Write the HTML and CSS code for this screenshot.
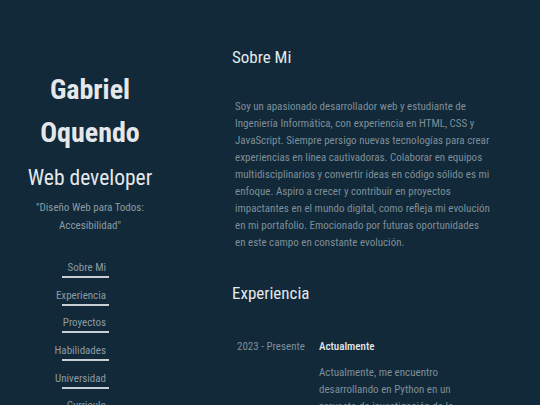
FILE: index.html
```html
<!DOCTYPE html>
<html lang="es">
<head>
<meta charset="utf-8">
<title>Gabriel Oquendo</title>
<link rel="stylesheet" href="styles.css">
</head>
<body>
<div class="page">
  <aside class="sidebar">
    <h1 class="name">Gabriel<br>Oquendo</h1>
    <h2 class="role">Web developer</h2>
    <p class="quote">"Diseño Web para Todos:<br>Accesibilidad"</p>
    <nav class="nav">
      <a class="nav-link" href="#sobre"><span>Sobre Mi</span></a>
      <a class="nav-link" href="#experiencia"><span>Experiencia</span></a>
      <a class="nav-link" href="#proyectos"><span>Proyectos</span></a>
      <a class="nav-link" href="#habilidades"><span>Habilidades</span></a>
      <a class="nav-link" href="#universidad"><span>Universidad</span></a>
      <a class="nav-link" href="#curriculo"><span>Curriculo</span></a>
    </nav>
  </aside>
  <main class="main">
    <section class="section" id="sobre">
      <h3 class="section-title">Sobre Mi</h3>
      <p class="about">Soy un apasionado desarrollador web y estudiante de Ingeniería Informática, con experiencia en HTML, CSS y JavaScript. Siempre persigo nuevas tecnologías para crear experiencias en línea cautivadoras. Colaborar en equipos multidisciplinarios y convertir ideas en código sólido es mi enfoque. Aspiro a crecer y contribuir en proyectos impactantes en el mundo digital, como refleja mi evolución en mi portafolio. Emocionado por futuras oportunidades en este campo en constante evolución.</p>
    </section>
    <section class="section" id="experiencia">
      <h3 class="section-title">Experiencia</h3>
      <div class="exp">
        <div class="exp-date">2023 - Presente</div>
        <div class="exp-body">
          <div class="exp-title">Actualmente</div>
          <p class="exp-text">Actualmente, me encuentro desarrollando en Python en un proyecto de investigación de la universidad.</p>
        </div>
      </div>
    </section>
  </main>
</div>
</body>
</html>
```
FILE: styles.css
```css
html, body {
  margin: 0;
  padding: 0;
  background: #112938;
  height: 100%;
  overflow: hidden;
}
body {
  font-family: Roboto, "DejaVu Sans", sans-serif;
  font-stretch: condensed;
  color: #e2e8ec;
}
.page {
  display: grid;
  grid-template-columns: 180px 1fr;
}
.sidebar {
  display: flex;
  flex-direction: column;
  align-items: center;
  padding-top: 68px;
}
.name {
  margin: 0;
  font-size: 28px;
  line-height: 43px;
  font-weight: bold;
  text-align: center;
  color: #e4e8eb;
}
.role {
  margin: 9px 0 0;
  font-size: 21.5px;
  font-weight: normal;
  line-height: 30px;
  color: #e4e8eb;
}
.quote {
  margin: 6px 0 0;
  font-size: 11px;
  line-height: 18px;
  text-align: center;
  color: #8d9ba4;
}
.nav {
  display: flex;
  flex-direction: column;
  align-self: flex-start;
  margin: 25px 0 0 62px;
  gap: 9.7px;
}
.nav-link {
  display: flex;
  justify-content: flex-end;
  width: 44px;
  padding-right: 3px;
  height: 16px;
  border-bottom: 2px solid #c8d0d6;
  text-decoration: none;
  color: #8d9ba4;
  font-size: 11px;
  line-height: 16px;
  white-space: nowrap;
}
.main {
  padding: 44px 40px 0 52px;
}
.section-title {
  margin: 0;
  font-size: 17px;
  font-weight: normal;
  line-height: 26px;
  color: #e4e8eb;
}
.about {
  margin: 28px 0 0 3px;
  width: 255px;
  font-size: 11px;
  line-height: 17px;
  color: #7f8e98;
}
.section + .section {
  margin-top: 29px;
}
.exp {
  display: flex;
  gap: 14px;
  margin: 32px 0 0 5px;
  font-size: 11px;
}
.exp-date {
  width: 68px;
  line-height: 17px;
  color: #7f8e98;
  white-space: nowrap;
}
.exp-title {
  line-height: 17px;
  color: #e4e8eb;
  font-weight: 500;
}
.exp-text {
  margin: 9px 0 0;
  width: 140px;
  line-height: 17px;
  color: #7f8e98;
}
```
